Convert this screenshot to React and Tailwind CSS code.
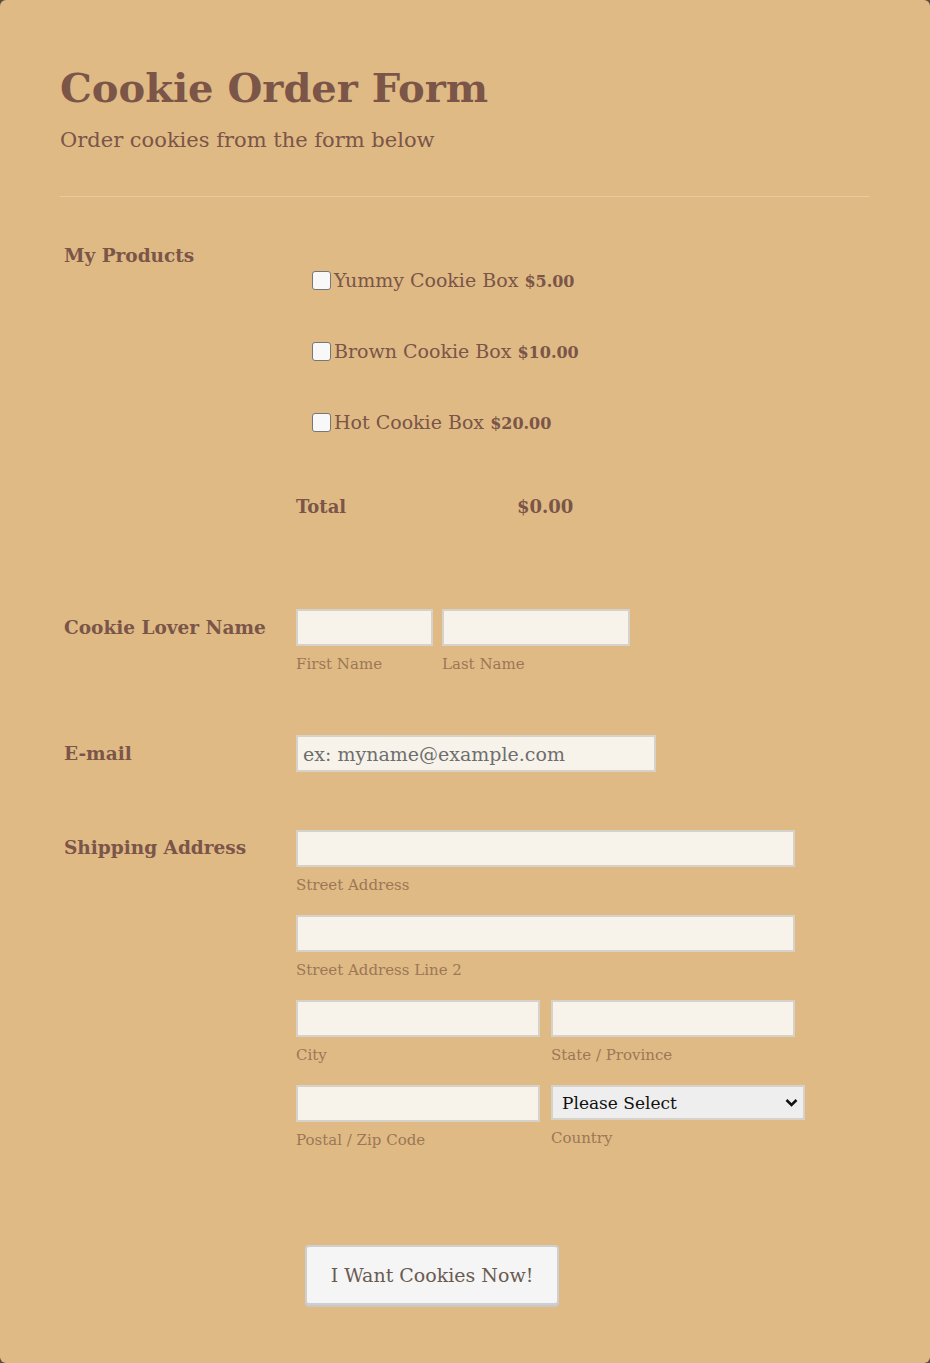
import { useState } from "react";

const products = [
  { name: "Yummy Cookie Box", price: "$5.00" },
  { name: "Brown Cookie Box", price: "$10.00" },
  { name: "Hot Cookie Box", price: "$20.00" },
];

const inputCls =
  "h-[37px] border-2 border-[#d6d2ca] bg-[#f7f3ea] px-[5px] text-[19px] text-[#6b6b6b] outline-none";

function Field({ width, sub }) {
  return (
    <div className="flex flex-col" style={{ width }}>
      <input className={inputCls} />
      <span className="mt-[8px] text-[15px] leading-5 text-[#9c7756]">{sub}</span>
    </div>
  );
}

function Row({ label, children, className = "" }) {
  return (
    <div className={`flex ${className}`}>
      <div className="w-[236px] shrink-0 pl-[4px] text-[18.5px] font-bold text-[#7a5548]">{label}</div>
      <div className="flex-1">{children}</div>
    </div>
  );
}

export default function App() {
  const [checked, setChecked] = useState([false, false, false]);

  return (
    <div className="min-h-[1363px] bg-[#5a4a40] font-['DejaVu_Serif','Liberation_Serif',serif]">
      <div className="min-h-[1363px] rounded-[6px] bg-[#dfba85] px-[60px] pt-[58px] pb-[56px]">
        <h1 className="text-[40px] font-bold leading-[60px] text-[#7a5548]">Cookie Order Form</h1>
        <p className="mt-[6px] text-[21px] leading-8 text-[#7a5548]">Order cookies from the form below</p>
        <div className="mt-[40px] h-px bg-[#e8cc9e]" />

        <Row label="My Products" className="mt-[47px] leading-6">
          <div className="mt-[24px] pl-[16px]">
            {products.map((p, i) => (
              <label key={p.name} className="flex h-[71px] items-start gap-[3px] text-[19px] leading-6 text-[#7a5548]">
                <input
                  type="checkbox"
                  checked={checked[i]}
                  onChange={() => setChecked((c) => c.map((v, j) => (j === i ? !v : v)))}
                  className="mt-[3px] h-[19px] w-[19px] appearance-none rounded-[3px] border border-[#767676] bg-[#f8f8f8]"
                />
                <span>
                  {p.name} <span className="text-[16px] font-bold">{p.price}</span>
                </span>
              </label>
            ))}
            <div className="-ml-[16px] mt-[14px] flex text-[18px] font-bold text-[#7a5548]">
              <span className="w-[221px]">Total</span>
              <span>$0.00</span>
            </div>
          </div>
        </Row>

        <Row label={<div className="pt-[7px]">Cookie Lover Name</div>} className="mt-[90px] leading-6">
          <div className="flex gap-[9px]">
            <Field width={137} sub="First Name" />
            <Field width={188} sub="Last Name" />
          </div>
        </Row>

        <Row label={<div className="pt-[7px]">E-mail</div>} className="mt-[61px] leading-6">
          <input className={`${inputCls} w-[360px] placeholder:text-[#6e6e6e]`} placeholder="ex: myname@example.com" />
        </Row>

        <Row label={<div className="pt-[6px]">Shipping Address</div>} className="mt-[58px] leading-6">
          <div className="flex flex-col gap-[20px]">
            <Field width={499} sub="Street Address" />
            <Field width={499} sub="Street Address Line 2" />
            <div className="flex gap-[11px]">
              <Field width={244} sub="City" />
              <Field width={244} sub="State / Province" />
            </div>
            <div className="flex gap-[11px]">
              <Field width={244} sub="Postal / Zip Code" />
              <div className="flex w-[254px] flex-col">
                <div className="relative">
                  <select className="h-[35px] w-full appearance-none border-2 border-[#d6d2ca] bg-[#eeeeee] px-[9px] text-[17px] text-[#111111] outline-none">
                    <option>Please Select</option>
                  </select>
                  <svg
                    viewBox="0 0 24 24"
                    className="pointer-events-none absolute right-[6px] top-[10px] h-[15px] w-[15px]"
                    fill="none"
                    stroke="#111"
                    strokeWidth="4"
                  >
                    <path d="M4 8l8 8 8-8" />
                  </svg>
                </div>
                <span className="mt-[8px] text-[15px] leading-5 text-[#9c7756]">Country</span>
              </div>
            </div>
          </div>
        </Row>

        <div className="mt-[95px] pl-[245px]">
          <button className="h-[60px] w-[254px] rounded-[4px] border-2 border-[#cfcfcf] bg-[#f5f5f5] text-[19px] text-[#6a5b52] shadow-[0_2px_0_#c8c8c8]">
            I Want Cookies Now!
          </button>
        </div>
      </div>
    </div>
  );
}
